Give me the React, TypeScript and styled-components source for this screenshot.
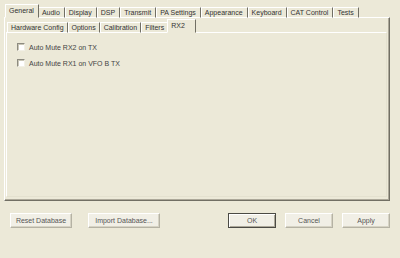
import React, { useState } from 'react'
import styled, { createGlobalStyle } from 'styled-components'

const GlobalStyle = createGlobalStyle`
  html, body {
    margin: 0;
    padding: 0;
    background: #ece9d8;
  }
  body {
    font-family: 'Liberation Sans', Arial, sans-serif;
    font-size: 7px;
    color: #333;
  }
`

const outerTabs = ['General', 'Audio', 'Display', 'DSP', 'Transmit', 'PA Settings', 'Appearance', 'Keyboard', 'CAT Control', 'Tests']
const innerTabs = ['Hardware Config', 'Options', 'Calibration', 'Filters', 'RX2']

const App = () => {
  const [outer, setOuter] = useState('General')
  const [inner, setInner] = useState('RX2')
  const [muteTx, setMuteTx] = useState(false)
  const [muteVfo, setMuteVfo] = useState(false)

  return (
    <Window>
      <GlobalStyle />
      <OuterTabs>
        <TabStrip>
          {outerTabs.map((t) => (
            <Tab key={t} $active={t === outer} $pad={4} onClick={() => setOuter(t)}>
              {t}
            </Tab>
          ))}
        </TabStrip>
        <OuterPanel>
          <TabStrip $inner>
            {innerTabs.map((t) => (
              <Tab key={t} $active={t === inner} $pad={t === 'RX2' ? 10 : 3} onClick={() => setInner(t)}>
                {t}
              </Tab>
            ))}
          </TabStrip>
          <InnerPanel>
            <CheckRow onClick={() => setMuteTx(!muteTx)}>
              <Box $checked={muteTx} />
              Auto Mute RX2 on TX
            </CheckRow>
            <CheckRow onClick={() => setMuteVfo(!muteVfo)}>
              <Box $checked={muteVfo} />
              Auto Mute RX1 on VFO B TX
            </CheckRow>
          </InnerPanel>
        </OuterPanel>
      </OuterTabs>
      <Footer>
        <Group>
          <Button $width={62}>Reset Database</Button>
          <Button $width={72}>Import Database...</Button>
        </Group>
        <Group $gap={9}>
          <Button $width={48} $default>OK</Button>
          <Button $width={48}>Cancel</Button>
          <Button $width={48}>Apply</Button>
        </Group>
      </Footer>
    </Window>
  )
}

const Window = styled.div`
  width: 400px;
  height: 258px;
  box-sizing: border-box;
  padding: 4px 10px 0 4px;
  background: #ece9d8;
  display: flex;
  flex-direction: column;
`

const OuterTabs = styled.div`
  display: flex;
  flex-direction: column;
  width: 386px;
`

const TabStrip = styled.div<{ $inner?: boolean }>`
  display: flex;
  align-items: flex-end;
  height: ${(p) => (p.$inner ? 13 : 14)}px;
  padding-left: ${(p) => (p.$inner ? 1 : 2)}px;
  margin-bottom: -1px;
  position: relative;
  z-index: 1;
`

const Tab = styled.div<{ $active?: boolean; $pad: number }>`
  box-sizing: border-box;
  height: ${(p) => (p.$active ? 14 : 11)}px;
  line-height: ${(p) => (p.$active ? 12 : 10)}px;
  padding: 0 ${(p) => p.$pad}px 0 3px;
  margin: ${(p) => (p.$active ? '0 -1px 0 -1px' : '0')};
  white-space: nowrap;
  background: #ece9d8;
  border-top: 1px solid #fff;
  border-left: 1px solid #fff;
  border-right: 1px solid #716f64;
  border-bottom: ${(p) => (p.$active ? '1px solid #ece9d8' : '1px solid #fff')};
  cursor: default;
  position: relative;
  z-index: ${(p) => (p.$active ? 2 : 1)};
`

const OuterPanel = styled.div`
  box-sizing: border-box;
  height: 184px;
  padding: 2px 2px 3px 1px;
  border-top: 1px solid #fff;
  border-left: 1px solid #fff;
  border-right: 1px solid #716f64;
  border-bottom: 1px solid #716f64;
  box-shadow: inset -1px -1px 0 #aca899;
  display: flex;
  flex-direction: column;
`

const InnerPanel = styled.div`
  flex: 1;
  box-sizing: border-box;
  padding: 10px 9px;
  border-top: 1px solid #fff;
  border-left: 1px solid #fff;
  border-right: 1px solid #e4e1cf;
  border-bottom: 1px solid #e4e1cf;
  display: flex;
  flex-direction: column;
  gap: 8px;
`

const CheckRow = styled.label`
  display: flex;
  align-items: center;
  gap: 4px;
  height: 8px;
  padding-left: 1px;
  color: #444;
`

const Box = styled.span<{ $checked?: boolean }>`
  box-sizing: border-box;
  width: 8px;
  height: 8px;
  background: #fff;
  border-top: 1px solid #8d8b80;
  border-left: 1px solid #8d8b80;
  border-right: 1px solid #f2f0e6;
  border-bottom: 1px solid #f2f0e6;
  box-shadow: inset 1px 1px 0 #c9c6b6;
  position: relative;
  &::after {
    content: ${(p) => (p.$checked ? "'✓'" : "''")};
    position: absolute;
    left: 0;
    top: -2px;
    font-size: 7px;
  }
`

const Footer = styled.div`
  display: flex;
  justify-content: space-between;
  margin-top: 12px;
  padding-left: 6px;
`

const Group = styled.div<{ $gap?: number }>`
  display: flex;
  gap: ${(p) => p.$gap ?? 16}px;
`

const Button = styled.button<{ $width: number; $default?: boolean }>`
  box-sizing: border-box;
  width: ${(p) => p.$width}px;
  height: 15px;
  padding: 0;
  font-family: 'Liberation Sans', Arial, sans-serif;
  font-size: 7px;
  color: #555;
  background: #f1efe6;
  border: 1px solid ${(p) => (p.$default ? '#4b4a44' : '#b5b2a4')};
  border-top-color: ${(p) => (p.$default ? '#4b4a44' : '#fff')};
  border-left-color: ${(p) => (p.$default ? '#4b4a44' : '#fff')};
  box-shadow: ${(p) => (p.$default ? 'inset 1px 1px 0 #fff, inset -1px -1px 0 #aca899' : 'inset -1px -1px 0 #d6d3c4')};
  outline: none;
`

export default App
